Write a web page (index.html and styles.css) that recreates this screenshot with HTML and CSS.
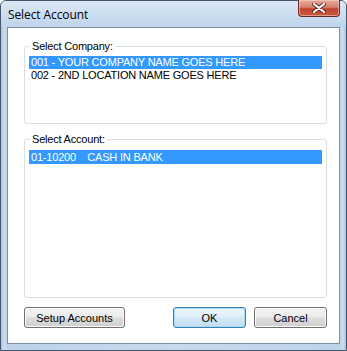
FILE: index.html
```html
<!DOCTYPE html>
<html lang="en">
<head>
    <meta charset="UTF-8">
    <meta name="viewport" content="width=device-width, initial-scale=1.0">
    <title>Select Account</title>
    <link rel="stylesheet" href="styles.css">
</head>
<body>

    <div class="window">
        <!-- Title bar -->
        <div class="titlebar">
            <span class="title">Select Account</span>
            <button class="close-btn" aria-label="Close">
                <svg width="14" height="10" viewBox="0 0 14 10">
                    <path d="M2 1 L12 9 M12 1 L2 9" stroke="#5a2a24" stroke-width="4" stroke-linecap="round"/>
                    <path d="M2 1 L12 9 M12 1 L2 9" stroke="#ffffff" stroke-width="2.2" stroke-linecap="round"/>
                </svg>
            </button>
        </div>

        <!-- Dialog body -->
        <div class="client">
            <fieldset class="group">
                <legend>Select Company:</legend>
                <ul class="listbox company-list">
                    <li class="selected">001 - YOUR COMPANY NAME GOES HERE</li>
                    <li>002 - 2ND LOCATION NAME GOES HERE</li>
                </ul>
            </fieldset>

            <fieldset class="group group-account">
                <legend>Select Account:</legend>
                <ul class="listbox account-list">
                    <li class="selected">01-10200&nbsp;&nbsp;&nbsp;&nbsp;CASH IN BANK</li>
                </ul>
            </fieldset>

            <div class="buttons">
                <button class="btn btn-setup">Setup Accounts</button>
                <button class="btn btn-ok default">OK</button>
                <button class="btn btn-cancel">Cancel</button>
            </div>
        </div>
    </div>

</body>
</html>
```

FILE: styles.css
```css
body {
    margin: 0;
    font-family: "Liberation Sans", Arial, sans-serif;
    background: #ffffff;
}

.window {
    width: 347px;
    height: 351px;
    box-sizing: border-box;
    border: 1px solid #46566a;
    border-radius: 6px 6px 0 0;
    background: linear-gradient(90deg, #a9c2de 0px, #c9dcef 3px, #bcd2ea 6px, #c6daee 50%, #bdd3ea calc(100% - 6px), #cbddef calc(100% - 3px), #a9c2de 100%);
    display: flex;
    flex-direction: column;
}

.titlebar {
    height: 26px;
    display: flex;
    justify-content: space-between;
    align-items: flex-start;
    border-radius: 5px 5px 0 0;
    background: linear-gradient(180deg, #dbe8f5 0%, #cadcef 60%, #bfd4eb 100%);
}

.title {
    font-family: "Open Sans", "Noto Sans", sans-serif;
    font-size: 12px;
    letter-spacing: -0.1px;
    color: #000000;
    padding: 5px 0 0 7px;
}

.close-btn {
    width: 42px;
    height: 17px;
    margin: -1px 6px 0 0;
    padding: 0;
    border: 1px solid #6b2c24;
    border-top: none;
    border-radius: 0 0 4px 4px;
    background: linear-gradient(180deg, #e7aa9d 0%, #d7816f 45%, #c2432f 55%, #c95b3f 100%);
    box-shadow: inset 0 0 0 1px rgba(255, 220, 210, 0.5);
    display: flex;
    align-items: center;
    justify-content: center;
}

.client {
    height: 317px;
    margin: 0 6px 6px 6px;
    box-sizing: border-box;
    border: 1px solid #7d8fa6;
    background: #ffffff;
    padding: 12px 12px 0 16px;
    display: flex;
    flex-direction: column;
}

.group {
    margin: 0;
    padding: 3px 4px 4px 4px;
    border: 1px solid #d5dfe5;
    border-radius: 3px;
    min-width: 0;
}

.group legend {
    font-size: 11px;
    line-height: 13px;
    letter-spacing: -0.2px;
    padding: 0 2px;
    margin-left: 1px;
    color: #000000;
}

.group-account {
    margin-top: 9px;
    padding-top: 4px;
}

.listbox {
    list-style: none;
    margin: 0;
    padding: 0;
    font-size: 11px;
    line-height: 13px;
    letter-spacing: -0.2px;
}

.company-list {
    height: 63px;
}

.account-list {
    height: 143px;
}

.listbox li {
    padding-left: 2px;
    white-space: nowrap;
}

.listbox li.selected {
    background: #3399ff;
    color: #ffffff;
}

.account-list li {
    line-height: 14px;
}

.buttons {
    display: flex;
    gap: 8px;
    margin-top: 9px;
}

.btn {
    height: 21px;
    padding: 0;
    font-family: "Liberation Sans", Arial, sans-serif;
    font-size: 11px;
    color: #000000;
    border: 1px solid #707070;
    border-radius: 3px;
    background: linear-gradient(180deg, #f2f2f2 0%, #ebebeb 48%, #dddddd 52%, #cfcfcf 100%);
    box-shadow: inset 0 0 0 1px #fbfbfb;
    cursor: pointer;
}

.btn-setup {
    width: 101px;
    margin-right: auto;
}

.btn-ok,
.btn-cancel {
    width: 73px;
}

.btn.default {
    border-color: #3c7fb1;
    box-shadow: inset 0 0 0 1px #a6d9f4;
    background: linear-gradient(180deg, #eaf6fd 0%, #e0eef7 48%, #d1e7f5 52%, #c4def0 100%);
}
```
